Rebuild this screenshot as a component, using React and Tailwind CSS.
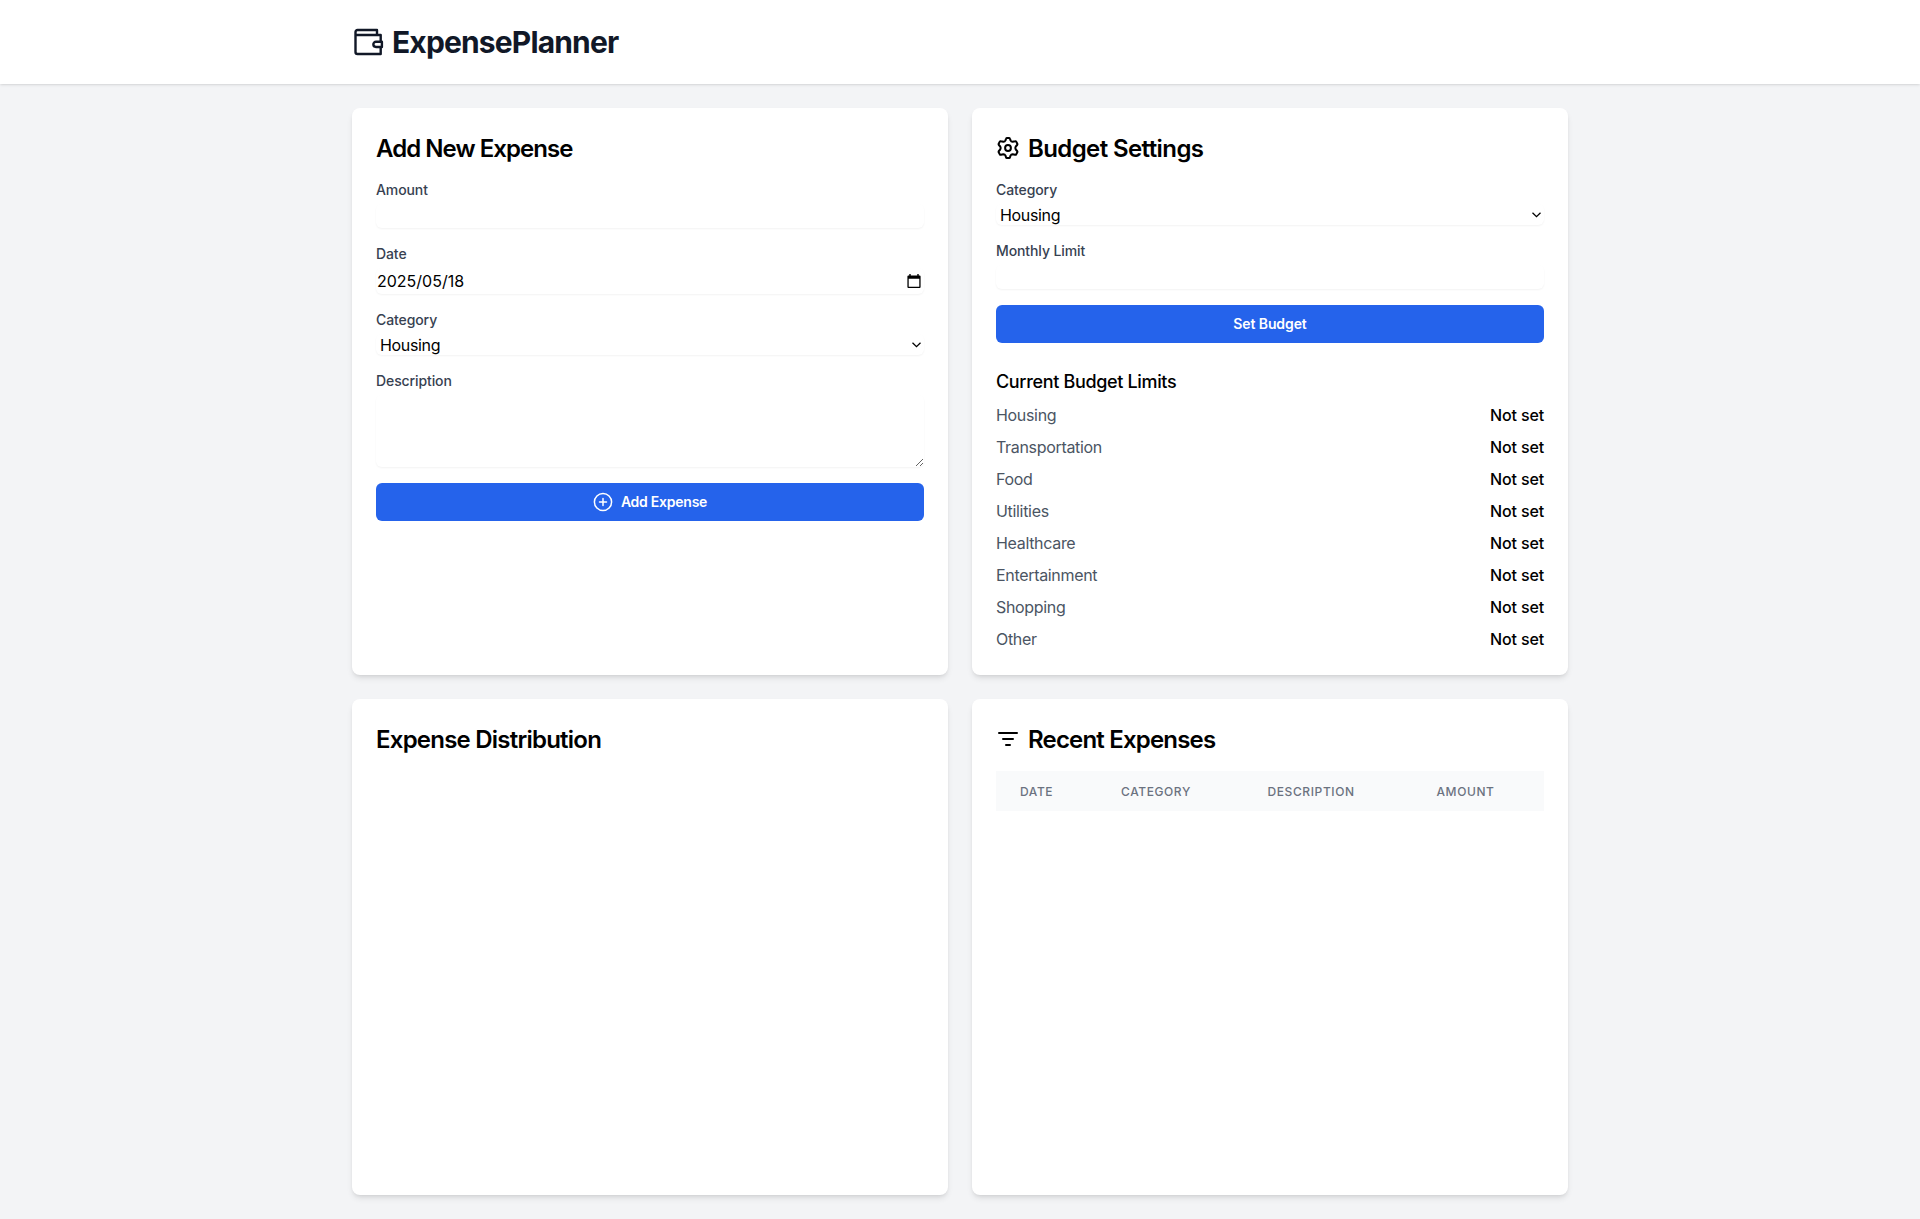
import React from "react";

const categories = [
  "Housing",
  "Transportation",
  "Food",
  "Utilities",
  "Healthcare",
  "Entertainment",
  "Shopping",
  "Other",
];

const columns = [
  { name: "Date", width: "w-[101px]" },
  { name: "Category", width: "w-[146.5px]" },
  { name: "Description", width: "w-[169px]" },
  { name: "Amount", width: "w-[131.5px]" },
];

function WalletIcon() {
  return (
    <svg className="mr-2 size-8" viewBox="0 0 32 32" fill="none" stroke="currentColor" strokeWidth="2.4" strokeLinejoin="round">
      <path d="M28.7 15.7V9H3.5M25 9V4H5.5a2 2 0 0 0-2 2V26a2 2 0 0 0 2 2h23.2v-7" />
      <path d="M29.9 15.7h-5.9a2.65 2.65 0 0 0 0 5.3h5.9z" />
    </svg>
  );
}

function GearIcon() {
  return (
    <svg className="mr-2 size-6" viewBox="-12 -12 24 24" fill="none" stroke="currentColor" strokeWidth="2" strokeLinejoin="round">
      <path d="M-1.2-10.1H1.2Q1.8-10.1 2-9.3L2.5-7.6Q3.2-6.2 4.7-6.3L7-6.8Q7.8-7 8.2-6.4L9.3-4.2Q9.6-3.6 9.1-3L7.8-1.5Q6.9 0 7.8 1.5L9.1 3Q9.6 3.6 9.3 4.2L8.2 6.4Q7.8 7 7 6.8L4.7 6.3Q3.2 6.2 2.5 7.6L2 9.3Q1.8 10.1 1.2 10.1H-1.2Q-1.8 10.1-2 9.3L-2.5 7.6Q-3.2 6.2-4.7 6.3L-7 6.8Q-7.8 7-8.2 6.4L-9.3 4.2Q-9.6 3.6-9.1 3L-7.8 1.5Q-6.9 0-7.8-1.5L-9.1-3Q-9.6-3.6-9.3-4.2L-8.2-6.4Q-7.8-7-7-6.8L-4.7-6.3Q-3.2-6.2-2.5-7.6L-2-9.3Q-1.8-10.1-1.2-10.1Z" />
      <circle r="2.9" />
    </svg>
  );
}

function FilterIcon() {
  return (
    <svg className="mr-2 size-6" viewBox="0 0 24 24" fill="none" stroke="currentColor" strokeWidth="2" strokeLinecap="round">
      <path d="M3 6h18M7 12h10M10 18h4" />
    </svg>
  );
}

function PlusCircleIcon() {
  return (
    <svg className="mr-2 size-5" viewBox="0 0 20 20" fill="none" stroke="currentColor" strokeWidth="1.5" strokeLinecap="round">
      <circle cx="10" cy="10" r="8.6" />
      <path d="M10 6.5v7M6.5 10h7" />
    </svg>
  );
}

function CalendarIcon() {
  return (
    <svg className="mr-[3px] size-[14px]" viewBox="0 0 14 14" fill="currentColor">
      <path fillRule="evenodd" d="M2.3 0h1.4v1.4h6.6V0h1.4v1.4h.9a1 1 0 0 1 1 1V13a1 1 0 0 1-1 1H1.4a1 1 0 0 1-1-1V2.4a1 1 0 0 1 1-1h.9zM1.7 4.7v8h10.6v-8z" />
    </svg>
  );
}

function Card({ title, icon, tracking, children }) {
  return (
    <section className="rounded-lg bg-white p-6 shadow-[0_4px_6px_-1px_rgba(0,0,0,0.1),0_2px_4px_-2px_rgba(0,0,0,0.1)]">
      <h2 className="mb-4 flex items-center text-2xl leading-8 font-semibold">
        {icon}
        <span className={"pt-0.5 leading-[30px] " + tracking}>{title}</span>
      </h2>
      {children}
    </section>
  );
}

function Field({ label, children }) {
  return (
    <div>
      <label className="mb-1 block text-sm font-medium tracking-[-0.1px] text-[#374151]">{label}</label>
      {children}
    </div>
  );
}

const control = "block w-full rounded-md shadow-[0_1px_2px_0_rgba(0,0,0,0.05)] outline-none";

function CategorySelect() {
  return (
    <div className="relative">
      <select
        className={control + " h-[21px] appearance-none pt-px pl-1 leading-5 tracking-[-0.33px]"}
        defaultValue="Housing"
      >
        {categories.map((c) => (
          <option key={c}>{c}</option>
        ))}
      </select>
      <svg
        className="pointer-events-none absolute top-2 right-[3px] h-[6px] w-[9px]"
        viewBox="0 0 9 6"
        fill="none"
        stroke="currentColor"
        strokeWidth="1.3"
      >
        <path d="M0.5 0.8L4.5 4.7L8.5 0.8" />
      </svg>
    </div>
  );
}

function Button({ tracking, children }) {
  return (
    <button
      className={
        "flex h-[38px] w-full items-center justify-center rounded-md bg-[#2563eb] text-sm font-semibold text-white " + tracking
      }
    >
      {children}
    </button>
  );
}

export default function App() {
  return (
    <div className="min-h-[1219px] bg-[#f3f4f6] font-[Inter,sans-serif] text-base text-black">
      <header className="bg-white shadow-[0_1px_3px_0_rgba(0,0,0,0.1),0_1px_2px_-1px_rgba(0,0,0,0.1)]">
        <div className="mx-auto flex h-[84px] max-w-7xl items-center px-8 text-[#111827]">
          <WalletIcon />
          <h1 className="text-3xl font-bold tracking-[-0.85px]">ExpensePlanner</h1>
        </div>
      </header>
      <main className="mx-auto grid max-w-7xl grid-cols-2 gap-6 px-8 py-6">
        <Card title="Add New Expense" tracking="tracking-[-0.95px]">
          <form className="flex flex-col gap-4">
            <Field label="Amount">
              <input type="number" className={control + " h-6"} />
            </Field>
            <Field label="Date">
              <div className={control + " h-[26px]"}>
                <div className="flex h-full items-center justify-between pl-px">
                  <span>2025/05/18</span>
                  <CalendarIcon />
                </div>
              </div>
            </Field>
            <Field label="Category">
              <CategorySelect />
            </Field>
            <Field label="Description">
              <textarea rows="3" className={control + " h-[72px]"} />
            </Field>
            <Button tracking="tracking-[-0.25px]">
              <PlusCircleIcon />
              Add Expense
            </Button>
          </form>
        </Card>

        <Card title="Budget Settings" icon={<GearIcon />} tracking="tracking-[-0.6px]">
          <form className="mb-6 flex flex-col gap-4">
            <Field label="Category">
              <CategorySelect />
            </Field>
            <Field label="Monthly Limit">
              <input type="number" className={control + " h-6"} />
            </Field>
            <Button tracking="tracking-[-0.1px]">Set Budget</Button>
          </form>
          <h3 className="mb-2 pt-0.5 text-lg leading-[26px] font-medium tracking-[-0.34px]">Current Budget Limits</h3>
          <ul className="flex flex-col gap-2">
            {categories.map((c) => (
              <li key={c} className="flex justify-between">
                <span className="tracking-[-0.32px] text-[#4b5563]">{c}</span>
                <span className="font-medium tracking-[-0.15px]">Not set</span>
              </li>
            ))}
          </ul>
        </Card>

        <Card title="Expense Distribution" tracking="tracking-[-0.77px]">
          <div className="h-[400px]" />
        </Card>

        <Card title="Recent Expenses" icon={<FilterIcon />} tracking="tracking-[-0.81px]">
          <table className="w-full table-fixed">
            <thead className="bg-[#f9fafb]">
              <tr>
                {columns.map((c) => (
                  <th
                    key={c.name}
                    className={
                      c.width + " px-6 pt-[13px] pb-[11px] text-left text-xs font-medium tracking-wider text-[#6b7280] uppercase"
                    }
                  >
                    {c.name}
                  </th>
                ))}
              </tr>
            </thead>
          </table>
        </Card>
      </main>
    </div>
  );
}
